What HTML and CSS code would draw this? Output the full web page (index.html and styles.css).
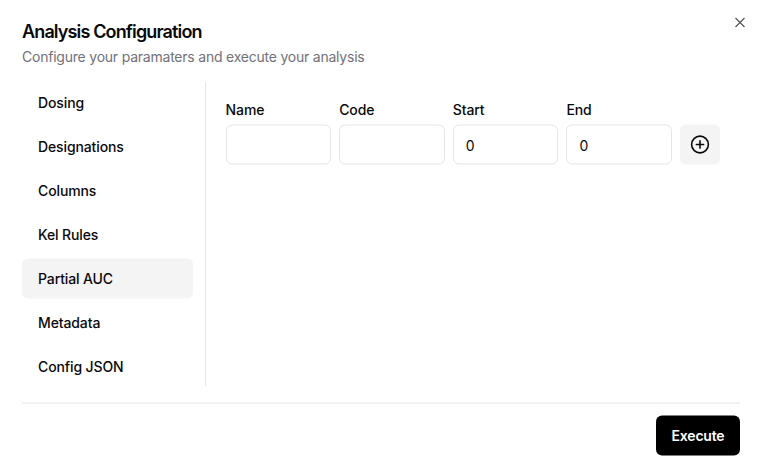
FILE: index.html
```html
<!DOCTYPE html>
<html lang="en">
<head>
<meta charset="utf-8">
<title>Analysis Configuration</title>
<link rel="stylesheet" href="styles.css">
</head>
<body>
<div class="dialog">
  <button class="close" aria-label="Close"><svg width="16" height="16" viewBox="0 0 16 16" fill="none" stroke="currentColor" stroke-width="1.2"><path d="M3.500 4l9 9M12.500 4l-9 9"/></svg></button>
  <header class="header">
    <h1 class="title">Analysis Configuration</h1>
    <p class="subtitle">Configure your paramaters and execute your analysis</p>
  </header>
  <main class="content">
    <nav class="tabs">
      <button class="tab">Dosing</button>
      <button class="tab">Designations</button>
      <button class="tab">Columns</button>
      <button class="tab">Kel Rules</button>
      <button class="tab active">Partial AUC</button>
      <button class="tab">Metadata</button>
      <button class="tab">Config JSON</button>
    </nav>
    <section class="panel">
      <form class="row">
        <label class="field">Name<input class="input" type="text"></label>
        <label class="field">Code<input class="input" type="text"></label>
        <label class="field">Start<input class="input" type="text" value="0"></label>
        <label class="field">End<input class="input" type="text" value="0"></label>
        <button class="add" type="button" aria-label="Add"><svg width="20" height="20" viewBox="0 0 20 20" fill="none" stroke="currentColor" stroke-width="1.6" stroke-linecap="round"><circle cx="10" cy="10" r="8.4"/><path d="M10 6.400v7.200M6.400 10h7.200"/></svg></button>
      </form>
    </section>
  </main>
  <footer class="footer"><button class="execute">Execute</button></footer>
</div>
</body>
</html>
```
FILE: styles.css
```css
* { box-sizing: border-box; }
body { margin: 0; background: #fff; color: #09090b; font-family: Inter, sans-serif; font-size: 14px; }
button, input { font: inherit; color: inherit; border: 0; margin: 0; }
.dialog { position: relative; height: 470px; padding: 22px 22px 0; }
.close { position: absolute; top: 14px; right: 14px; width: 16px; height: 16px; padding: 0; background: none; color: #555; }
.close svg, .add svg { display: block; }
.title { margin: 0; font-size: 18px; line-height: 19px; font-weight: 600; letter-spacing: -0.86px; }
.subtitle { margin: 6px 0 0; line-height: 20px; letter-spacing: -0.22px; color: #71717a; }
.content { display: flex; height: 304px; margin-top: 15px; }
.tabs { display: flex; flex-direction: column; gap: 4px; width: 184px; padding: 1px 12px 0 0; border-right: 1px solid #e4e4e7; }
.tab { height: 40px; padding: 0 16px; border-radius: 6px; background: none; font-weight: 500; letter-spacing: -0.12px; text-align: left; }
.tab.active { padding-bottom: 2px; background: #f4f4f5; transform: translateY(0.5px); }
.panel { flex: 1; padding: 18px 20px 0 19.6px; }
.row { display: grid; grid-template-columns: repeat(4, 1fr) 40px; gap: 8px; align-items: end; }
.field { display: block; min-width: 0; line-height: 20px; font-weight: 500; letter-spacing: -0.12px; }
.input { display: block; width: 100%; height: 40px; margin-top: 4px; padding: 0 12px; border: 1px solid #e4e4e7; border-radius: 6px; font-weight: 400; transform: translateY(0.5px); }
.add { display: flex; align-items: center; justify-content: center; width: 40px; height: 40px; padding: 0; border-radius: 6px; background: #f4f4f5; transform: translateY(0.5px); }
.footer { display: flex; justify-content: flex-end; margin-top: 16px; padding-top: 11px; border-top: 2px solid #f1f1f3; }
.execute { width: 84px; height: 40px; padding: 0 0 2px; border-radius: 6px; background: #000; color: #fff; font-weight: 600; letter-spacing: -0.2px; transform: translateY(0.5px); }
```
